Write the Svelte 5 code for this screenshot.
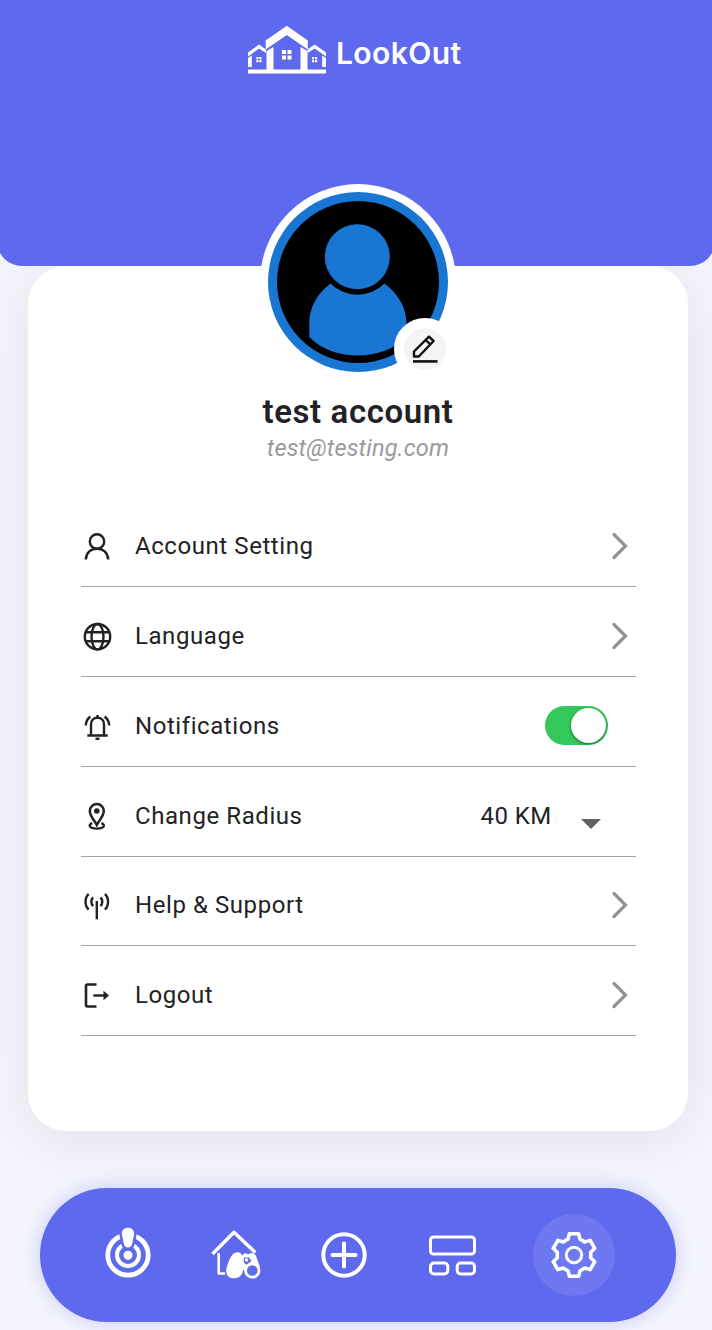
<script lang="ts">
	const rows = [
		{ icon: 'user', label: 'Account Setting', kind: 'link' },
		{ icon: 'globe', label: 'Language', kind: 'link' },
		{ icon: 'bell', label: 'Notifications', kind: 'toggle' },
		{ icon: 'pin', label: 'Change Radius', kind: 'select' },
		{ icon: 'signal', label: 'Help & Support', kind: 'link' },
		{ icon: 'logout', label: 'Logout', kind: 'link' }
	];

	let notifications = $state(true);
	let radius = $state('40 KM');

	// one tooth, repeated six times around the hub
	const tooth = [[-8.4, -14.5], [-6, -15.8], [-4.6, -21.3], [4.6, -21.3], [6, -15.8], [8.4, -14.5]];
	const gear = Array.from({ length: 6 }, (_, i) => {
		const a = (i * Math.PI) / 3;
		return tooth
			.map(([x, y]) => {
				const px = 28 + x * Math.cos(a) - y * Math.sin(a);
				const py = 28 + x * Math.sin(a) + y * Math.cos(a);
				return `${px.toFixed(2)},${py.toFixed(2)}`;
			})
			.join(' ');
	}).join(' ');
</script>

<div class="screen">
	<header>
		<div class="brand">
			<svg width="82" height="52" viewBox="246 24 82 52" fill="#fff">
				<path d="M265.7 40.5 286.8 25.8 307.8 40.5V49.5L286.8 35 265.7 49.5Z" />
				<path d="M266.5 51 273.5 47V70h-7ZM300.5 47 307.500 51V70h-7Z" />
				<path d="M248 52.5 259 44.5 266 49.5V53L259 48.5 248 56.5ZM326 52.5 314.7 44.5 307.5 49.5V53L314.7 48.5 326 56.5Z" />
				<path d="M248 58 251.8 55.5V67H248ZM326 58 322.2 55.5V67H326Z" />
				<path d="M248 69.5H326V73.5H248Z" />
				<path d="M282 50h4v4h-4ZM287.5 50h4v4h-4ZM282 55.5h4v4h-4ZM287.5 55.5h4v4h-4Z" />
				<path d="M256.3 57h2.2v2.2h-2.2ZM259.300 57h2.200v2.200h-2.200ZM256.300 60h2.200v2.200h-2.200ZM259.300 60h2.200v2.200h-2.200ZM312 57h2.200v2.200h-2.200ZM315 57h2.200v2.200h-2.200ZM312 60h2.200v2.200h-2.200ZM315 60h2.200v2.200h-2.200Z" />
			</svg>
			<span>LookOut</span>
		</div>
	</header>

	<main>
		<div class="avatar">
			<svg width="196" height="196" viewBox="0 0 196 196">
				<circle cx="98" cy="98" r="98" fill="#fff" />
				<circle cx="98" cy="98" r="90" fill="#1976d2" />
				<circle cx="98" cy="98" r="81" fill="#000" />
				<circle cx="97.3" cy="72.7" r="32.5" fill="#1976d2" />
				<path fill="#1976d2" d="M70.5 99.5C56 110 49.3 125 49.3 139V153C62 166 80 171.5 97.5 171.5C117 171.5 134 165 146.5 153V139C146.5 125 139 110 124.5 99.5A38 38 0 0 1 70.5 99.5Z" />
			</svg>
			<button class="edit" aria-label="Edit picture">
				<svg width="28" height="28" viewBox="0 0 28 28" fill="none" stroke="#111" stroke-width="2.4">
					<path d="M3 21.500V16.500L18 1.700 22.600 6 7.800 21.500ZM14.700 5 19.300 9.400" stroke-linejoin="round" />
					<path d="M2 26.400H26.500" stroke-width="2.600" />
				</svg>
			</button>
		</div>

		<h1>test account</h1>
		<p class="email">test@testing.com</p>

		<ul>
			{#each rows as row}
				<li>
					<svg class="icon" width="32" height="32" viewBox="0 0 32 32">
						{#if row.icon === 'user'}
							<circle cx="16" cy="11.5" r="7.2" />
							<path d="M4.8 29.5C5.2 22.5 10 18.700 16 18.700S26.800 22.500 27.200 29.500" />
						{:else if row.icon === 'globe'}
							<circle cx="16.500" cy="16.700" r="12.700" />
							<ellipse cx="16.500" cy="16.700" rx="6" ry="12.700" />
							<path d="M5 12.200H28M5 21.200H28" />
						{:else if row.icon === 'bell'}
							<path d="M6.300 25.500H26.700M10 25V14.500C10 10.500 12.500 7.800 16.500 7.800S23 10.500 23 14.500V25M16.500 8V5" />
							<path d="M4.700 15.500C5 11.500 6.500 8.800 9.300 6.500M28.300 15.500C28 11.500 26.500 8.800 23.700 6.500" />
							<path d="M14.500 28.800H18.500" />
						{:else if row.icon === 'pin'}
							<path d="M15.800 24.800C13.500 20.500 8.800 16 8.800 11A7 7 0 0 1 22.800 11C22.800 16 18.100 20.500 15.800 24.800Z" stroke-width="2.500" />
							<circle class="solid" cx="15.800" cy="11" r="2.800" />
							<path d="M11.300 23.200C6.800 24.500 8 28.600 15.800 28.600S24.800 24.500 20.300 23.200" />
						{:else if row.icon === 'signal'}
							<path d="M15.800 12V30.300" />
							<path d="M12.200 8.500C9.700 10.500 9.700 15 12.200 17M19.400 8.500C21.900 10.500 21.900 15 19.400 17" />
							<path d="M7.700 5C3.500 8.500 3.500 16.800 7.700 20.500M23.900 5C28.100 8.500 28.100 16.800 23.900 20.500" />
						{:else}
							<path d="M15.500 5.500H6.500Q5 5.500 5 7V26Q5 27.500 6.500 27.500H15.500" stroke-width="2.600" />
							<path d="M12.300 16.500H24" />
							<path class="solid" d="M22.500 11.800 28 16.500 22.500 21.200Z" />
						{/if}
					</svg>
					<span class="label">{row.label}</span>

					{#if row.kind === 'link'}
						<svg class="chevron" width="20" height="28" viewBox="0 0 20 28">
							<path d="M4 2.500 15.500 14 4 25.500" />
						</svg>
					{:else if row.kind === 'toggle'}
						<button
							class="toggle"
							class:on={notifications}
							aria-label={row.label}
							onclick={() => (notifications = !notifications)}
						></button>
					{:else}
						<span class="value">{radius}</span>
						<svg class="caret" width="20" height="10" viewBox="0 0 20 10">
							<path d="M0 0H20L10 10Z" />
						</svg>
					{/if}
				</li>
			{/each}
		</ul>
	</main>

	<nav>
		<button aria-label="Radar">
			<svg width="56" height="56" viewBox="0 0 56 56">
				<circle cx="28" cy="28" r="20.200" stroke-width="4.800" />
				<circle cx="28" cy="28" r="11" stroke-width="4" />
				<path class="solid halo" d="M28 .7C31.700 .7 34.400 3.300 34.200 7L32 17.500C31.200 21.500 24.800 21.500 24 17.500L21.800 7C21.600 3.300 24.300 .7 28 .7Z" />
				<circle class="solid" cx="28" cy="28.200" r="4.500" />
			</svg>
		</button>
		<button aria-label="Search homes">
			<svg width="56" height="56" viewBox="0 0 56 56">
				<path d="M4.500 27 26 5.200 47.300 25.500" stroke-width="3.400" />
				<path d="M10.700 26V46.500H17" stroke-width="2.600" />
				<path class="solid" d="M34 29C36 25.500 38.500 26 40 27.500C42 25.500 46.500 25 48 29L52 40H44L40 43H34Z" />
				<path class="cut" d="M36 30.500H41L43.500 34 38.500 38 35.500 35Z" />
				<circle class="solid" cx="38.500" cy="33" r="1.800" />
				<path class="solid" d="M26.500 26C30 24 34 25.500 34.500 30L35 43.500C34.500 48.500 30.500 51.300 26 51.300C20.500 51.300 17.300 47.500 18.300 42.500C19.300 37 22.500 28 26.500 26Z" />
				<circle class="hole" cx="44.300" cy="43.500" r="6.700" stroke-width="2.800" />
			</svg>
		</button>
		<button aria-label="Add">
			<svg width="56" height="56" viewBox="0 0 56 56">
				<circle cx="28" cy="28" r="20.700" stroke-width="4" />
				<path d="M28 16.500V39.500M16.500 28H39.500" stroke-width="4" stroke-linecap="round" />
			</svg>
		</button>
		<button aria-label="Dashboard">
			<svg width="56" height="56" viewBox="0 0 56 56">
				<rect x="6.500" y="10" width="44" height="17" rx="3" />
				<rect x="6.500" y="36" width="17.300" height="11" rx="3.500" />
				<rect x="33.200" y="36" width="17.300" height="11" rx="3.500" />
			</svg>
		</button>
		<button class="active" aria-label="Settings">
			<svg width="56" height="56" viewBox="0 0 56 56">
				<polygon points={gear} stroke-width="3.600" />
				<circle cx="28" cy="28" r="7.700" />
			</svg>
		</button>
	</nav>
</div>

<style>
	:global(body) {
		background: #f4f5fc;
	}

	.screen {
		display: flex;
		flex-direction: column;
		height: 1330px;
		overflow: hidden;
		background: #f4f5fc;
		color: #222226;
		font-family: Roboto, sans-serif;
	}

	header {
		position: relative;
		z-index: 1;
		flex: none;
		height: 266px;
		margin: 0 -3px;
		border-radius: 0 0 25px 25px;
		background: #5e69ed;
	}

	.brand {
		display: flex;
		align-items: center;
		gap: 8px;
		padding: 24px 0 0 249px;
		color: #fff;
	}

	.brand svg {
		flex: none;
	}

	.brand span {
		height: 44px;
		margin-top: 2px;
		font: 600 30px/48px Inter, sans-serif;
		letter-spacing: 0.4px;
	}

	main {
		display: flex;
		flex-direction: column;
		align-items: center;
		flex: none;
		box-sizing: border-box;
		width: 660px;
		height: 865px;
		margin-left: 28px;
		border-radius: 38px;
		background: #fff;
		box-shadow: 0 8px 60px rgba(0, 0, 0, 0.08);
	}

	.avatar {
		position: relative;
		z-index: 2;
		height: 196px;
		margin-top: -82px;
	}

	.avatar > svg {
		display: block;
	}

	button {
		padding: 0;
		border: 0;
		background: none;
		cursor: pointer;
	}

	.edit {
		position: absolute;
		left: 134px;
		top: 134px;
		display: grid;
		place-items: center;
		width: 62px;
		height: 62px;
		border: 10px solid #fff;
		border-radius: 50%;
		background: #f4f4f4;
	}

	h1 {
		margin: 12px 0 0;
		font-size: 33px;
		font-weight: 600;
		line-height: 40px;
		letter-spacing: 0.6px;
	}

	.email {
		margin: 0;
		color: #9a9a9a;
		font-size: 23.500px;
		font-style: italic;
		line-height: 32px;
		letter-spacing: 0.150px;
	}

	ul {
		width: 555px;
		margin: 33.400px 0 0;
		padding: 0;
		list-style: none;
	}

	li {
		display: flex;
		align-items: center;
		box-sizing: border-box;
		height: 89.800px;
		padding-top: 9px;
		border-bottom: 1px solid #a5a5a5;
		font-size: 24px;
		letter-spacing: 0.570px;
	}

	.icon {
		fill: none;
		stroke: #222226;
		stroke-width: 2.400;
	}

	.icon .solid {
		fill: #222226;
		stroke: none;
	}

	.label {
		flex: 1;
		margin-left: 22.500px;
	}

	.chevron {
		margin-right: 6px;
		fill: none;
		stroke: #929292;
		stroke-width: 3.200;
		stroke-linecap: round;
	}

	.toggle {
		display: flex;
		align-items: center;
		box-sizing: border-box;
		width: 63px;
		height: 39px;
		margin-right: 28px;
		padding: 0 2px;
		border-radius: 20px;
		background: #ccc;
	}

	.toggle::after {
		content: '';
		width: 35px;
		height: 35px;
		border-radius: 50%;
		background: #fff;
		box-shadow: 0 1px 3px rgba(0, 0, 0, 0.5);
	}

	.toggle.on {
		justify-content: flex-end;
		background: #34c759;
	}

	.value {
		margin-right: 29px;
		letter-spacing: 0.400px;
	}

	.caret {
		margin: 17px 35px 0 0;
		fill: #616161;
	}

	nav {
		display: grid;
		grid-template-columns: 108px 108px 108px 108px 136px;
		align-items: center;
		justify-items: center;
		flex: none;
		box-sizing: border-box;
		width: 636px;
		height: 134px;
		margin: 57px 0 0 40px;
		padding-left: 34px;
		border-radius: 67px;
		background: #5e69ed;
		box-shadow: 0 0 20px rgba(94, 105, 237, 0.3);
	}

	nav button {
		display: grid;
		place-items: center;
		width: 82px;
		height: 82px;
		border-radius: 50%;
	}

	nav .active {
		background: #6e78f0;
	}

	nav svg {
		fill: none;
		stroke: #fff;
		stroke-width: 3;
		stroke-linejoin: round;
	}

	nav .solid {
		fill: #fff;
		stroke: none;
	}

	nav .halo {
		stroke: #5e69ed;
		stroke-width: 5;
		paint-order: stroke;
	}

	nav .hole,
	nav .cut {
		fill: #5e69ed;
	}

	nav .cut {
		stroke: none;
	}
</style>
